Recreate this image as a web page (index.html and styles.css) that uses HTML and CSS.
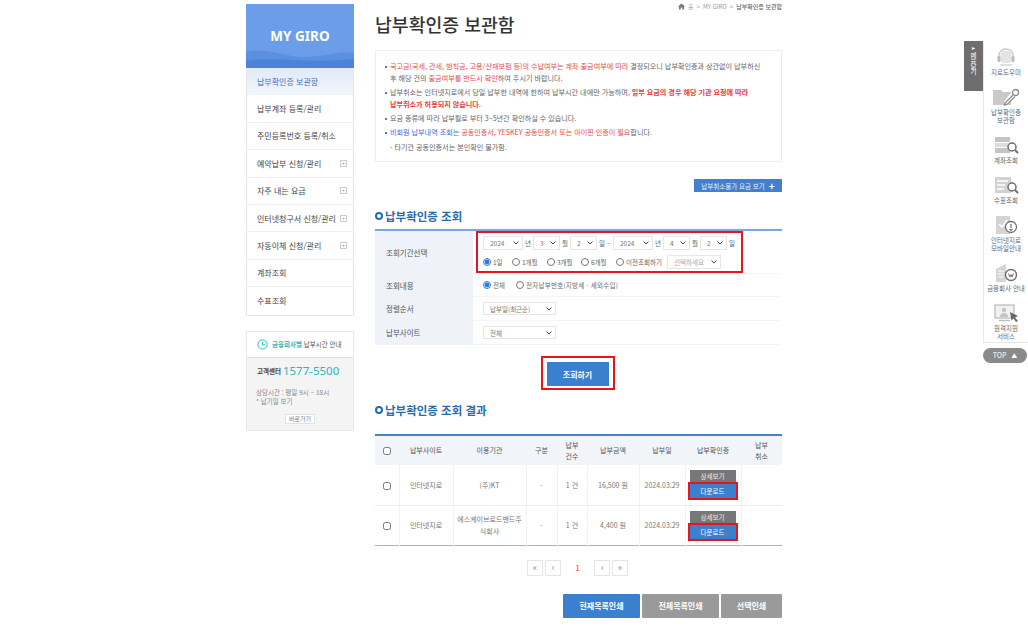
FILE: index.html
```html
<!DOCTYPE html>
<html lang="ko">
<head>
    <meta charset="UTF-8">
    <title>납부확인증 보관함</title>
    <link rel="stylesheet" href="styles.css">
</head>
<body>
    <div class="page">
        <!-- left menu -->
        <aside class="sidebar">
            <div class="side-menu">
                <div class="side-head">
                    <svg class="side-wave" viewBox="0 0 108 24" preserveAspectRatio="none"><path d="M0 8C20 3 36 12 56 13C76 14 92 6 108 9V24H0Z" fill="#5b8fe0"/><path d="M0 17C30 12 50 20 108 15V24H0Z" fill="#4c82d8"/></svg>
                    <span class="side-title">MY GIRO</span>
                </div>
                <a class="side-item active">납부확인증 보관함</a>
                <a class="side-item">납부계좌 등록/관리</a>
                <a class="side-item">주민등록번호 등록/취소</a>
                <a class="side-item">예약납부 신청/관리<i class="plus">+</i></a>
                <a class="side-item">자주 내는 요금<i class="plus">+</i></a>
                <a class="side-item">인터넷청구서 신청/관리<i class="plus">+</i></a>
                <a class="side-item">자동이체 신청/관리<i class="plus">+</i></a>
                <a class="side-item">계좌조회</a>
                <a class="side-item">수표조회</a>
            </div>
            <div class="side-info">
                <div class="info-head">
                    <svg width="11" height="11" viewBox="0 0 11 11"><circle cx="5.5" cy="5.5" r="4.6" fill="none" stroke="#35b8b8" stroke-width="1"/><path d="M5.5 2.8V5.8H8" fill="none" stroke="#35b8b8" stroke-width="1"/></svg>
                    <span><b>금융회사별</b> 납부시간 안내</span>
                </div>
                <div class="info-body">
                    <div class="info-tel"><b>고객센터</b><span>1577-5500</span></div>
                    <p>상담시간 : 평일 9시 ~ 18시<br>* 납기일 보기</p>
                    <a class="info-link">바로가기</a>
                </div>
            </div>
        </aside>

        <!-- main content -->
        <main class="content">
            <div class="crumb">
                <svg width="7" height="7" viewBox="0 0 7 7"><path d="M3.5 .5L7 3.6H6V6.5H4.3V4.6H2.7V6.5H1V3.6H0Z" fill="#777"/></svg>
                <span>홈</span><span>&gt;</span><span>MY GIRO</span><span>&gt;</span><b>납부확인증 보관함</b>
            </div>
            <h1 class="page-title">납부확인증 보관함</h1>

            <ul class="notice">
                <li><em class="red">국고금(국세, 관세, 범칙금, 고용/산재보험 등)의 수납여부는 계좌 출금여부에 따라</em> 결정되오니 납부확인증과 상관없이 납부하신<br>후 해당 건의 <em class="red">출금여부를 반드시 확인</em>하여 주시기 바랍니다.</li>
                <li>납부취소는 인터넷지로에서 당일 납부한 내역에 한하여 납부시간 내에만 가능하며, <strong>일부 요금의 경우 해당 기관 요청에 따라<br>납부취소가 허용되지 않습니다.</strong></li>
                <li>요금 종류에 따라 납부월로 부터 3~5년간 확인하실 수 있습니다.</li>
                <li><em class="blue">비회원 납부내역 조회는</em> <em class="red">공동인증서, YESKEY 공동인증서 또는 아이핀 인증이 필요</em>합니다.</li>
                <li class="plain">- 타기관 공동인증서는 본인확인 불가함.</li>
            </ul>

            <div class="form-link"><a class="btn-small">납부취소불가 요금 보기<i>+</i></a></div>

            <h2 class="section-title">납부확인증 조회</h2>
            <table class="search-table">
                <colgroup><col class="label-col"><col></colgroup>
                <tr class="row-period">
                    <th>조회기간선택</th>
                    <td>
                        <div class="mark-box">
                            <div class="date-row">
                                <select class="sel-year"><option>2024</option></select><span>년</span>
                                <select class="sel-num"><option>3</option></select><span>월</span>
                                <select class="sel-num"><option>2</option></select><span class="sep">일 ~</span>
                                <select class="sel-year"><option>2024</option></select><span>년</span>
                                <select class="sel-num"><option>4</option></select><span>월</span>
                                <select class="sel-num"><option>2</option></select><span>일</span>
                            </div>
                            <div class="radio-row">
                                <label class="w-day"><input type="radio" name="period" checked>1일</label>
                                <label class="w-1m"><input type="radio" name="period">1개월</label>
                                <label class="w-3m"><input type="radio" name="period">3개월</label>
                                <label class="w-6m"><input type="radio" name="period">6개월</label>
                                <label class="w-old"><input type="radio" name="period">이전조회하기</label>
                                <select class="sel-old"><option>선택하세요</option></select>
                            </div>
                        </div>
                    </td>
                </tr>
                <tr class="row-type">
                    <th>조회내용</th>
                    <td>
                        <div class="radio-row">
                            <label class="w-all"><input type="radio" name="kind" checked>전체</label>
                            <label class="spaced"><input type="radio" name="kind">전자납부번호(지방세 · 세외수입)</label>
                        </div>
                    </td>
                </tr>
                <tr class="row-sel">
                    <th>정렬순서</th>
                    <td><select class="sel-wide"><option>납부일(최근순)</option></select></td>
                </tr>
                <tr class="row-sel">
                    <th>납부사이트</th>
                    <td><select class="sel-wide"><option>전체</option></select></td>
                </tr>
            </table>

            <div class="search-action">
                <div class="mark-btn"><button class="btn-main">조회하기</button></div>
            </div>

            <h2 class="section-title result-title">납부확인증 조회 결과</h2>
            <table class="result-table">
                <colgroup>
                    <col class="c-check"><col class="c-site"><col class="c-org"><col class="c-kind"><col class="c-count">
                    <col class="c-amount"><col class="c-date"><col class="c-cert"><col>
                </colgroup>
                <thead>
                    <tr>
                        <th><input type="checkbox"></th>
                        <th>납부사이트</th>
                        <th>이용기관</th>
                        <th>구분</th>
                        <th>납부<br>건수</th>
                        <th>납부금액</th>
                        <th>납부일</th>
                        <th>납부확인증</th>
                        <th>납부<br>취소</th>
                    </tr>
                </thead>
                <tbody>
                    <tr>
                        <td><input type="checkbox"></td>
                        <td>인터넷지로</td>
                        <td>(주)KT</td>
                        <td>-</td>
                        <td>1 건</td>
                        <td>16,500 원</td>
                        <td>2024.03.29</td>
                        <td class="cert-cell">
                            <a class="btn-detail">상세보기</a>
                            <div class="mark-down"><a class="btn-down">다운로드</a></div>
                        </td>
                        <td></td>
                    </tr>
                    <tr>
                        <td><input type="checkbox"></td>
                        <td>인터넷지로</td>
                        <td>에스케이브로드밴드주<br>식회사</td>
                        <td>-</td>
                        <td>1 건</td>
                        <td>4,400 원</td>
                        <td>2024.03.29</td>
                        <td class="cert-cell">
                            <a class="btn-detail">상세보기</a>
                            <div class="mark-down"><a class="btn-down">다운로드</a></div>
                        </td>
                        <td></td>
                    </tr>
                </tbody>
            </table>

            <div class="pager">
                <a>«</a><a>‹</a><b>1</b><a>›</a><a>»</a>
            </div>

            <div class="print-row">
                <button class="btn-print blue">현재목록인쇄</button>
                <button class="btn-print">전체목록인쇄</button>
                <button class="btn-print short">선택인쇄</button>
            </div>
        </main>

        <!-- quick menu -->
        <div class="quick">
            <div class="quick-tab"><i>▸</i><span>메뉴닫기</span></div>
            <div class="quick-col">
                <nav class="quick-menu">
                    <a class="quick-item">
                        <svg viewBox="0 0 30 18"><path d="M8 11V8C8 3.5 11 1 15 1S22 3.5 22 8V11" fill="none" stroke="#c9c9c9" stroke-width="1.4"/><rect x="9.5" y="3" width="11" height="12" rx="3" fill="#e4e4e4"/><rect x="6.5" y="8" width="3" height="6" rx="1" fill="#bdbdbd"/><rect x="20.5" y="8" width="3" height="6" rx="1" fill="#bdbdbd"/><path d="M9 17H21" stroke="#c9c9c9" stroke-width="1.2"/></svg>
                        <span>지로도우미</span>
                    </a>
                    <a class="quick-item">
                        <svg viewBox="0 0 30 18"><path d="M2 2H10L12 4H20V17H2Z" fill="#c9c9c9"/><path d="M15 15L23 5" stroke="#fff" stroke-width="5"/><circle cx="24.5" cy="4.5" r="3" fill="#fff" stroke="#8a8a8a" stroke-width="1.3"/><path d="M22 7L14.5 14.5L13.5 17L16.5 16L24 8.5" fill="#fff" stroke="#8a8a8a" stroke-width="1.3"/></svg>
                        <span>납부확인증<br>보관함</span>
                    </a>
                    <a class="quick-item">
                        <svg viewBox="0 0 30 18"><rect x="4" y="1" width="15" height="5" fill="#c4c4c4"/><rect x="4" y="7" width="15" height="4" fill="#dcdcdc"/><rect x="4" y="12" width="15" height="5" fill="#c4c4c4"/><circle cx="21" cy="11" r="4" fill="#fff" stroke="#6f6f6f" stroke-width="1.5"/><path d="M24 14L27 17" stroke="#6f6f6f" stroke-width="2"/></svg>
                        <span>계좌조회</span>
                    </a>
                    <a class="quick-item">
                        <svg viewBox="0 0 30 18"><rect x="4" y="1" width="16" height="16" fill="#d2d2d2"/><path d="M6 5H17M6 9H14M6 13H13" stroke="#fff" stroke-width="1.5"/><circle cx="21" cy="11" r="4" fill="#fff" stroke="#6f6f6f" stroke-width="1.5"/><path d="M24 14L27 17" stroke="#6f6f6f" stroke-width="2"/></svg>
                        <span>수표조회</span>
                    </a>
                    <a class="quick-item">
                        <svg viewBox="0 0 30 18"><rect x="5" y="0" width="14" height="18" fill="#d4d4d4"/><path d="M8 8L11 11L16 4" fill="none" stroke="#fff" stroke-width="1.5"/><circle cx="20" cy="11" r="5.5" fill="#fff" stroke="#6f6f6f" stroke-width="1.3"/><path d="M20 8V12M18.5 13L20 14.5L21.5 13" fill="none" stroke="#6f6f6f" stroke-width="1.2"/></svg>
                        <span>인터넷지로<br>모바일안내</span>
                    </a>
                    <a class="quick-item">
                        <svg viewBox="0 0 30 18"><path d="M5 5L15 0V18H5Z" fill="#d4d4d4"/><path d="M7 7H13M7 10H13M7 13H13" stroke="#fff" stroke-width="1.2"/><circle cx="20" cy="11" r="5.5" fill="#fff" stroke="#6f6f6f" stroke-width="1.4"/><path d="M17.5 9.5L18.8 13L20 10.5L21.2 13L22.5 9.5" fill="none" stroke="#6f6f6f" stroke-width="1"/></svg>
                        <span>금융회사 안내</span>
                    </a>
                    <a class="quick-item">
                        <svg viewBox="0 0 30 18"><rect x="4" y="1" width="19" height="13" fill="#f1f1f1" stroke="#bdbdbd" stroke-width="1.3"/><circle cx="13" cy="6" r="2.2" fill="#c4c4c4"/><path d="M9 13C9 10 11 9 13 9S17 10 17 13Z" fill="#c4c4c4"/><path d="M8 16.5H19" stroke="#bdbdbd" stroke-width="1.4"/><path d="M19 8L27 12L24 13.5L27 17L25 18L22.5 14.5L20.5 16.5Z" fill="#666"/></svg>
                        <span>원격지원<br>서비스</span>
                    </a>
                </nav>
                <a class="quick-top">TOP <i>▲</i></a>
            </div>
        </div>
    </div>
</body>
</html>
```
FILE: styles.css
```css
*, *::before {
    box-sizing: border-box;
}

html, body {
    margin: 0;
    height: 100%;
    overflow: hidden;
    background-color: #fff;
}

body {
    font-family: "Noto Sans CJK KR", "Noto Sans", sans-serif;
    font-size: 7px;
    color: #666;
}

a {
    display: block;
    text-decoration: none;
}

i, em {
    font-style: normal;
}

.page {
    display: flex;
    align-items: flex-start;
    padding-left: 246px;
}

/* sidebar */

.sidebar {
    width: 108px;
    margin-top: 4px;
}

.side-menu {
    border: 1px solid #e6e6e6;
    border-top: none;
}

.side-head {
    position: relative;
    height: 64px;
    margin: 0 -1px;
    background-color: #6b9de9;
    display: flex;
    align-items: center;
    justify-content: center;
}

.side-wave {
    position: absolute;
    left: 0;
    bottom: 0;
    width: 100%;
    height: 24px;
}

.side-title {
    position: relative;
    color: #fff;
    font-size: 13.5px;
    font-weight: 700;
    font-family: "Noto Sans", sans-serif;
}

.side-item {
    height: 27.4px;
    display: flex;
    align-items: center;
    justify-content: space-between;
    padding: 0 6px 0 10px;
    font-size: 8px;
    color: #444;
    border-bottom: 1px solid #f0f0f0;
}

.side-item:last-child {
    border-bottom: none;
}

.side-item.active {
    background: linear-gradient(#e1eaf8, #f2f6fc);
    color: #4a6cc6;
    border-bottom: none;
}

.plus {
    width: 7px;
    height: 7px;
    border: 1px solid #ccc;
    color: #999;
    font-size: 6px;
    line-height: 5px;
    text-align: center;
}

.side-info {
    margin-top: 15px;
    border: 1px solid #e8e8e8;
    height: 100px;
}

.info-head {
    height: 26px;
    display: flex;
    align-items: center;
    gap: 4px;
    padding-left: 10px;
    font-size: 6.5px;
    color: #555;
    white-space: nowrap;
    border-bottom: 1px solid #e2e2e2;
}

.info-head b {
    color: #35b8b8;
}

.info-body {
    height: 72px;
    background-color: #f4f4f4;
    padding: 5px 9px;
}

.info-tel {
    display: flex;
    align-items: center;
    gap: 2px;
    height: 16px;
    margin-left: 1px;
    white-space: nowrap;
}

.info-tel b {
    font-size: 6.5px;
    color: #444;
}

.info-tel span {
    font-size: 11.5px;
    font-family: "Noto Sans", sans-serif;
    color: #2fb5bd;
}

.info-body p {
    margin: 9px 0 0;
    font-size: 6.5px;
    line-height: 9px;
    color: #888;
}

.info-link {
    width: 30px;
    height: 10px;
    margin: 8px auto 0;
    background-color: #fff;
    border: 1px solid #e2e2e2;
    font-size: 6px;
    line-height: 8px;
    text-align: center;
    color: #777;
}

/* main */

.content {
    width: 407px;
    margin-left: 21px;
}

.crumb {
    height: 13px;
    display: flex;
    align-items: center;
    justify-content: flex-end;
    gap: 3px;
    font-size: 6px;
    color: #999;
}

.crumb b {
    font-weight: 500;
    color: #666;
}

.page-title {
    margin: 0;
    height: 22px;
    font-size: 18.3px;
    line-height: 22px;
    font-weight: 500;
    color: #333;
}

.notice {
    list-style: none;
    margin: 15px 0 0;
    padding: 10px 20px 0 9px;
    height: 112px;
    border: 1px solid #eee;
    font-size: 7.1px;
    line-height: 11.7px;
    color: #666;
}

.notice li {
    position: relative;
    padding-left: 5px;
    margin-bottom: 2.6px;
    white-space: nowrap;
}

.notice li::before {
    content: "";
    position: absolute;
    left: 0;
    top: 5px;
    width: 2px;
    height: 2px;
    background-color: #5577cc;
}

.notice li.plain::before {
    display: none;
}

.red {
    color: #ea4a4a;
}

.blue {
    color: #4a6ee0;
}

.notice strong {
    color: #e83a3a;
    font-weight: 700;
}

.form-link {
    display: flex;
    justify-content: flex-end;
    margin-top: 17px;
}

.btn-small {
    width: 88px;
    height: 13px;
    display: flex;
    align-items: center;
    justify-content: center;
    gap: 4px;
    background-color: #3f80cf;
    color: #e8f0fa;
    font-size: 6.5px;
}

.btn-small i {
    font-size: 10px;
    line-height: 10px;
    font-weight: 700;
    color: #fff;
}

.section-title {
    display: flex;
    align-items: center;
    gap: 2px;
    margin: 17px 0 6px;
    height: 14px;
    font-size: 11.5px;
    font-weight: 700;
    color: #2a6aa8;
}

.section-title::before {
    content: "";
    width: 8px;
    height: 8px;
    border: 2px solid #1f6db5;
    border-radius: 50%;
}

/* search form */

.search-table {
    width: 100%;
    table-layout: fixed;
    border-collapse: collapse;
    border-top: 2px solid #7ba7dc;
    border-bottom: 1px solid #8fb3e0;
}

.label-col {
    width: 98px;
}

.search-table th {
    background-color: #eff3f9;
    font-weight: 400;
    font-size: 7.5px;
    color: #555;
    text-align: left;
    padding: 0 0 0 11px;
    border-bottom: 1px solid #f4f4f4;
}

.search-table td {
    padding: 0 0 0 10px;
    border-bottom: 1px solid #f4f4f4;
}

.row-period {
    height: 43px;
}

.row-period td {
    padding: 0 0 0 3px;
}

.row-type {
    height: 23px;
}

.row-sel {
    height: 24px;
}

.mark-box {
    width: 267px;
    height: 42px;
    border: 2px solid #e8141c;
    padding: 3px 0 0 5px;
}

select {
    appearance: none;
    height: 14px;
    padding: 0 8px 0 6px;
    border: 1px solid #e6e6e6;
    background: #fff url("data:image/svg+xml,%3Csvg xmlns='http://www.w3.org/2000/svg' width='6' height='4'%3E%3Cpath d='M.5.5L3 3L5.5.5' fill='none' stroke='%23444' stroke-width='1'/%3E%3C/svg%3E") no-repeat right 3px center;
    font-family: inherit;
    font-size: 6.5px;
    color: #777;
}

.date-row {
    display: flex;
    align-items: center;
    gap: 2px;
    font-size: 6.5px;
}

.date-row span {
    width: 6px;
    white-space: nowrap;
}

.date-row .sep {
    width: 12px;
}

.sel-year {
    width: 40px;
}

.sel-num {
    width: 27px;
}

.radio-row {
    display: flex;
    align-items: center;
}

.mark-box .radio-row {
    margin-top: 5px;
}

.radio-row label {
    display: flex;
    align-items: center;
    gap: 2px;
    font-size: 6.5px;
    white-space: nowrap;
}

.radio-row label.spaced {
    letter-spacing: .25px;
}

.radio-row input {
    width: 8px;
    height: 8px;
    margin: 0;
    accent-color: #2c7ad6;
}

.w-day { width: 29px; }
.w-1m { width: 35px; }
.w-3m { width: 34px; }
.w-6m { width: 35px; }
.w-old { width: 51px; }
.w-all { width: 33px; }

.sel-old {
    width: 54px;
    color: #aaa;
}

.sel-wide {
    width: 73px;
    height: 13px;
}

.search-action {
    display: flex;
    justify-content: center;
    margin-top: 11px;
}

.mark-btn {
    border: 2px solid #e8141c;
    padding: 4px 4px 2px;
    margin-left: -2px;
}

.btn-main {
    display: block;
    width: 62px;
    height: 24px;
    border: none;
    background-color: #3a80cf;
    color: #fff;
    font-family: inherit;
    font-size: 8px;
    font-weight: 700;
}

.result-title {
    margin: 13px 0 17px;
}

/* result table */

.result-table {
    width: 100%;
    table-layout: fixed;
    border-collapse: collapse;
    border-top: 2px solid #4a80c8;
    border-bottom: 1px solid #8fb9e6;
    font-size: 7px;
    text-align: center;
}

.c-check { width: 24px; }
.c-site { width: 54px; }
.c-org { width: 73px; }
.c-kind { width: 31px; }
.c-count { width: 30px; }
.c-amount { width: 52px; }
.c-date { width: 46px; }
.c-cert { width: 56px; }

.result-table th {
    height: 30px;
    background-color: #f1f4f9;
    font-weight: 400;
    line-height: 11px;
    color: #555;
}

.result-table td {
    height: 40px;
    padding: 0;
    line-height: 12px;
    color: #777;
    border-bottom: 1px solid #eee;
    border-right: 1px solid #f2f2f2;
}

.result-table td:last-child {
    border-right: none;
}

.result-table tr:last-child td {
    border-bottom: none;
}

.result-table input {
    width: 8px;
    height: 8px;
    margin: 0;
    vertical-align: middle;
}

.result-table td.cert-cell {
    padding-top: 1px;
}

.btn-detail {
    width: 46px;
    height: 12px;
    margin: 0 auto 0 4px;
    background-color: #777;
    color: #eee;
    font-size: 6.5px;
    line-height: 12px;
}

.mark-down {
    width: 50px;
    margin-left: 2px;
    padding: 0;
    border: 2px solid #e8141c;
}

.btn-down {
    height: 14px;
    background-color: #3a80cf;
    color: #fff;
    font-size: 6.5px;
    line-height: 14px;
}

/* pager and print buttons */

.pager {
    display: flex;
    align-items: center;
    justify-content: center;
    gap: 2px;
    margin-top: 14px;
    padding-right: 2px;
}

.pager a {
    width: 16px;
    height: 16px;
    border: 1px solid #e5e5e5;
    font-size: 9px;
    line-height: 13px;
    text-align: center;
    color: #888;
}

.pager b {
    width: 29px;
    font-size: 7px;
    text-align: center;
    color: #f07050;
}

.print-row {
    display: flex;
    justify-content: flex-end;
    gap: 2px;
    margin-top: 18px;
}

.btn-print {
    width: 77px;
    height: 24px;
    border: none;
    border-radius: 1px;
    background-color: #9a9a9a;
    color: #fff;
    font-family: inherit;
    font-size: 8px;
    font-weight: 700;
}

.btn-print.blue {
    background-color: #3a80cf;
}

.btn-print.short {
    width: 61px;
}

/* quick menu */

.quick {
    display: flex;
    align-items: flex-start;
    width: 64px;
    margin-left: 182px;
    margin-top: 41px;
}

.quick-tab {
    width: 19px;
    height: 50px;
    background-color: #6e6e6e;
    color: #fff;
    display: flex;
    flex-direction: column;
    align-items: center;
    padding-top: 3px;
    font-size: 6.5px;
}

.quick-tab i {
    font-size: 6px;
    line-height: 8px;
}

.quick-tab span {
    writing-mode: vertical-rl;
    text-orientation: upright;
    line-height: 10px;
    letter-spacing: -1px;
}

.quick-col {
    width: 45px;
}

.quick-menu {
    display: flex;
    flex-direction: column;
    gap: 12px;
    height: 302px;
    padding-top: 7px;
    border-left: 1px solid #e8e8e8;
    border-bottom: 1px solid #e8e8e8;
}

.quick-item {
    display: flex;
    flex-direction: column;
    align-items: center;
    gap: 2px;
    font-size: 6.5px;
    line-height: 8px;
    text-align: center;
    color: #666;
}

.quick-item svg {
    width: 30px;
    height: 18px;
}

.quick-top {
    width: 44px;
    height: 15px;
    margin-top: 5px;
    border-radius: 8px;
    background-color: #8a8a8a;
    color: #fff;
    font-size: 7px;
    line-height: 15px;
    text-align: center;
}

.quick-top i {
    font-size: 6px;
    margin-left: 3px;
}
```
